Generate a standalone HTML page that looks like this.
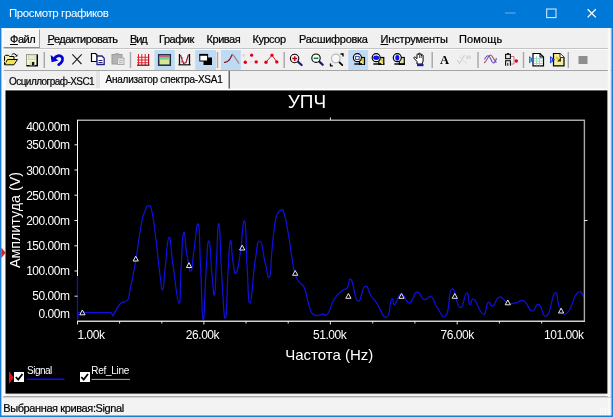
<!DOCTYPE html>
<html><head><meta charset="utf-8">
<style>
*{box-sizing:border-box;margin:0;padding:0}
html,body{width:613px;height:417px;overflow:hidden;background:#f0f0f0;font-family:"Liberation Sans",sans-serif}
#win{position:absolute;left:0;top:0;width:613px;height:417px;background:#f0f0f0}
#title{position:absolute;left:0;top:0;width:613px;height:28px;background:#0078d7;color:#fff;font-size:11.5px}
#title .t{position:absolute;left:9px;top:7px;white-space:nowrap;letter-spacing:-0.4px}
.abs{position:absolute}
#menu{position:absolute;left:1px;top:28px;width:611px;height:20px;background:#f0f0f0;font-size:11px;color:#000}
#menu span{position:absolute;top:4.500px;white-space:nowrap;letter-spacing:-0.45px;-webkit-text-stroke:0.22px #000}
#menu u{text-decoration:underline}
#tb{position:absolute;left:1px;top:48px;width:611px;height:22px;background:#f0f0f0}
#tabs{position:absolute;left:1px;top:70px;width:611px;height:21px;background:#f0f0f0;font-size:10px;-webkit-text-stroke:0.18px #000}
#plot{position:absolute;left:5px;top:91px;width:603px;height:302px;overflow:hidden}
#status{position:absolute;left:1px;top:397px;width:611px;height:19px;background:#f3f3f3;font-size:11px;color:#000;-webkit-text-stroke:0.2px #000}
.yl{position:absolute;color:#fff;font-size:12px;left:0;width:64.4px;text-align:right;white-space:nowrap;letter-spacing:-0.5px;line-height:14px}
.xl{position:absolute;color:#fff;font-size:12px;top:236.5px;white-space:nowrap;letter-spacing:-0.45px;line-height:14px}
.lg{position:absolute;color:#fff;font-size:10px;white-space:nowrap;line-height:12px}
.cb{position:absolute;width:10px;height:10px;background:#fff}
</style></head><body style="will-change:transform">
<div id="win"></div>
<div id="title"><span class="t">Просмотр графиков</span>
<svg class="abs" style="left:490px;top:0" width="123" height="28" viewBox="490 0 123 28">
<path d="M505 13h10.500" stroke="#8cc4f0" stroke-width="1" fill="none" opacity=".75"/>
<rect x="546.700" y="9" width="9.300" height="8.600" stroke="#cfe6fa" stroke-width="1.100" fill="none"/>
<path d="M587.600 9.200l8.200 8.200M595.800 9.200l-8.200 8.200" stroke="#fff" stroke-width="1.300" fill="none"/>
</svg>
</div>
<div id="menu">
<div class="abs" style="left:1px;top:1px;width:38px;height:19px;background:#f6f6f6;border-right:1px solid #a0a0a0;border-bottom:1px solid #8c8c8c;border-top:1px solid #fff;border-left:1px solid #fff"></div>
<span style="left:9px"><u>Ф</u>айл</span>
<span style="left:46.5px"><u>Р</u>едактировать</span>
<span style="left:129px;letter-spacing:-1.1px"><u>В</u>ид</span>
<span style="left:158px">График</span>
<span style="left:205.5px">Кривая</span>
<span style="left:251.5px">Курсор</span>
<span style="left:298px;letter-spacing:-0.3px">Расшифровка</span>
<span style="left:379.5px;letter-spacing:-0.13px"><u>И</u>нструменты</span>
<span style="left:458px;letter-spacing:0.15px">Помощь</span>
</div>
<div id="tb"><svg class="abs" style="left:0;top:0" width="611" height="23" viewBox="1 48 611 23">
<!-- highlights -->
<g fill="#bfdbf3">
<rect x="154.5" y="49.5" width="20.3" height="20.5"/>
<rect x="195.2" y="49.5" width="20.8" height="20.5"/>
<rect x="221" y="49.5" width="19.8" height="20.5"/>
<rect x="348.3" y="49.5" width="19.8" height="20.5"/>
</g>
<!-- separators -->
<g stroke="#a6a6a6" stroke-width="1.4">
<path d="M44.3 52v16M130.5 52v16M217.5 52v16M284.2 52v16M432.2 52v16M478 52v16M523.5 52v16M568.3 52v16"/>
</g>
<!-- 1 open -->
<g stroke="#000" stroke-width="1" stroke-linejoin="round">
<path d="M4.5 64.5v-8.2l1-1h3l1 1.2h4.5v3" fill="#f5ee9a"/>
<path d="M4.5 64.8l3-5.3h10l-3.6 5.3z" fill="#f2e25a"/>
<path d="M11.5 55c1.2-1.6 3.2-1.8 4.6 0" fill="none"/>
<path d="M15 56.5h2.4v-2.4z" fill="#000" stroke="none"/>
</g>
<!-- 2 save -->
<g>
<rect x="26.5" y="54.5" width="10.5" height="11" fill="#f7f7c6" stroke="#9a9a8a" stroke-width="1"/>
<path d="M37.3 54.5v11.4M26.5 65.7h11.3" stroke="#000" stroke-width="1.4" fill="none"/>
<rect x="28.5" y="55" width="6.5" height="4.5" fill="#e4ecd8" stroke="#b8c0a8" stroke-width=".6"/>
<rect x="29.5" y="61.5" width="5.5" height="4" fill="#d8d8c0"/>
<rect x="32" y="62" width="2.2" height="3.5" fill="#111"/>
</g>
<!-- 3 undo -->
<g>
<path d="M50.6 55l1 7.2l6.8-1.6z" fill="#0000d4"/>
<path d="M54.5 58.6c1.2-3 5.2-4 7.4-1.6c1.8 2.2 0.5 5.4-3.2 7.6" fill="none" stroke="#0000d4" stroke-width="2.8" stroke-linecap="round"/>
</g>
<!-- 4 X -->
<path d="M72.3 54.3l9.2 9.7M81.7 54.3l-9.4 10" stroke="#222" stroke-width="1.1" fill="none"/>
<!-- 5 copy -->
<g>
<path d="M91.5 53.5h4l1.5 1.5v6.5h-5.5z" fill="#fff" stroke="#000" stroke-width="1.2"/>
<path d="M97 56h5l2.2 2.2v6.3h-7.2z" fill="#fff" stroke="#202080" stroke-width="1.3"/>
<path d="M98.5 60.5h4M98.5 62.5h4" stroke="#202080" stroke-width="1.1"/>
</g>
<!-- 6 paste disabled -->
<g>
<rect x="112" y="54.5" width="10" height="9.5" fill="#b4b4b4" stroke="#9a9a9a" stroke-width="1"/>
<rect x="115" y="53.2" width="4" height="2.2" fill="#a8a8a8"/>
<rect x="117.5" y="58" width="6.5" height="6.5" fill="#e6e6e6" stroke="#aaa" stroke-width="1"/>
<path d="M119 60.5h3.5M119 62.5h3.5" stroke="#aaa" stroke-width=".8"/>
</g>
<!-- 7 grid -->
<g fill="none">
<rect x="137" y="54" width="12" height="11" fill="#fff" stroke="none"/>
<path d="M138.5 54v11M141.8 54v11M145.2 54v11M137 57.2h12M137 60h12M137 62.7h12" stroke="#e8202a" stroke-width="1.1"/>
<path d="M148.6 54v11" stroke="#b01018" stroke-width="1.2"/>
<path d="M137 65.2h12.4" stroke="#701010" stroke-width="1.3"/>
</g>
<!-- 8 legend -->
<g>
<rect x="158.7" y="54.8" width="11.6" height="10.4" fill="#d8e890" stroke="#1c2c48" stroke-width="1.5"/>
<rect x="159.5" y="55.6" width="10" height="2" fill="#c86080"/>
<rect x="159.5" y="57.6" width="10" height="2" fill="#70d090"/>
</g>
<!-- 9 cursors -->
<g fill="none">
<rect x="179" y="54" width="11" height="11" fill="#fff" stroke="none" opacity=".6"/>
<path d="M179.5 54v11M189.5 54v11" stroke="#111" stroke-width="1.3"/>
<path d="M178.5 64.8h12" stroke="#111" stroke-width="1.2"/>
<path d="M180.5 55l3 8.5l2.5-1l2.5-8" stroke="#981830" stroke-width="1.2"/>
<path d="M181 63l2-6" stroke="#e08090" stroke-width="1"/>
</g>
<!-- 10 overlapping squares -->
<g>
<rect x="203.5" y="57.5" width="8.5" height="7.5" fill="#000"/>
<rect x="199.8" y="55" width="7.8" height="6" fill="#fff" stroke="#000" stroke-width="1"/>
<path d="M199.3 54.7h8.8" stroke="#000" stroke-width="1.6"/>
</g>
<!-- 11 curve -->
<g fill="none" stroke-linecap="round">
<path d="M224.5 62.3c2 0.2 4-1 5.5-3.5l2.3-4.3" stroke="#801020" stroke-width="1.2"/>
<path d="M232.3 54.5c1.5 1 4.5 5.5 6.5 8.7" stroke="#a08088" stroke-width="1.2"/>
</g>
<!-- 12 dots -->
<g fill="#e0001c">
<circle cx="245.3" cy="62.3" r="1.7"/><circle cx="251.6" cy="55.2" r="1.6"/><circle cx="256.2" cy="61.9" r="1.7"/>
<circle cx="243.5" cy="55.5" r="1.4" fill="#f8c8e0"/><circle cx="251" cy="62" r="1.2" fill="#f4d8ec"/>
</g>
<!-- 13 dots line -->
<g fill="#e0001c">
<path d="M266 62.3l6-7.1l4.8 6.7" stroke="#e02038" stroke-width="1" fill="none"/>
<circle cx="266" cy="62.3" r="1.7"/><circle cx="272" cy="55.2" r="1.6"/><circle cx="276.8" cy="61.9" r="1.7"/>
</g>
<!-- 14 zoom in -->
<g>
<path d="M298 61.8l3.6 3.2" stroke="#18187a" stroke-width="2.2" stroke-linecap="round"/>
<circle cx="294.6" cy="58.5" r="4.2" fill="#fbf2f2" stroke="#000" stroke-width="1.1"/>
<path d="M292.300 58.6h4.800M294.700 56.200v4.800" stroke="#c00018" stroke-width="1.5"/>
</g>
<!-- 15 zoom out -->
<g>
<path d="M319.300 61.600l3.400 3.200" stroke="#18187a" stroke-width="2.2" stroke-linecap="round"/>
<circle cx="316" cy="58.200" r="4.200" fill="#f2fbf2" stroke="#000" stroke-width="1.1"/>
<path d="M313.800 58.300h4.500" stroke="#107838" stroke-width="1.5"/>
</g>
<!-- 16 zoom fit -->
<g>
<path d="M339 61.800l3.300 3.300" stroke="#000" stroke-width="1.700" stroke-linecap="round"/>
<circle cx="335.800" cy="58.500" r="4.300" fill="#f8f8f8" stroke="#b8b8b8" stroke-width="1.200"/>
<path d="M340.500 54h2.500v2.500M330.500 63.500v2.300h2.300" stroke="#000" stroke-width="1.300" fill="none"/>
</g>
<!-- 17 zoom rect (highlighted) -->
<g>
<rect x="359.5" y="57.5" width="5" height="6.8" fill="#d2ca58" stroke="#000" stroke-width="1.15"/>
<path d="M354.300 64h10.700" stroke="#000" stroke-width="1.400"/>
<path d="M360.5 61l3 3" stroke="#f0f0a0" stroke-width="1.2"/>
<circle cx="357.4" cy="57.700" r="4" fill="#fff" stroke="#000" stroke-width="1.2"/>
<rect x="355.6" y="56.4" width="3.6" height="3" fill="#fff" stroke="#3040c0" stroke-width="1"/>
</g>
<!-- 18 -->
<g>
<rect x="378.8" y="57.5" width="5" height="6.8" fill="#d2ca58" stroke="#000" stroke-width="1.15"/>
<path d="M373.300 64h11" stroke="#000" stroke-width="1.400"/>
<path d="M379.8 61l3 3" stroke="#f0f0a0" stroke-width="1.2"/>
<circle cx="376.200" cy="57.700" r="4" fill="#fff" stroke="#000" stroke-width="1.2"/>
<ellipse cx="376.200" cy="57.700" rx="3" ry="2.200" fill="#1010f0"/>
</g>
<!-- 19 -->
<g>
<rect x="399.3" y="57.5" width="5" height="6.8" fill="#e4e2b0" stroke="#000" stroke-width="1.150"/>
<path d="M394.300 64h10.500" stroke="#000" stroke-width="1.400"/>
<path d="M4.3 61l3 3" stroke="#d8d880" stroke-width="1.2"/>
<circle cx="397.300" cy="57.700" r="4" fill="#eef" stroke="#000" stroke-width="1.2"/>
<ellipse cx="397.300" cy="57.700" rx="2" ry="2.800" fill="#1010f0"/>
</g>
<!-- 20 hand -->
<g>
<path d="M417 64v-2.5l-3-3.2c-.6-.9.5-1.8 1.4-1l1.6 1.4v-4c0-1 1.5-1 1.5 0v-.8c0-1 1.6-1 1.6 0v.6c0-1 1.5-1 1.5 0v1c0-.9 1.5-.9 1.5 0v5.500l-1 3z" fill="#fff" stroke="#000" stroke-width="1"/>
<path d="M419.6 54.500v3.500M421.2 54.800v3.2" stroke="#000" stroke-width=".7"/>
<rect x="417" y="64" width="6.5" height="2.2" fill="#20208a"/>
</g>
<!-- 21 A -->
<text x="440" y="64.3" font-family="Liberation Serif" font-weight="bold" font-size="12.5" fill="#000">A</text>
<!-- 22 disabled -->
<g fill="none" stroke="#cfcfcf" stroke-width="1.2">
<path d="M457 60l2.5 3.500l5-8.5"/>
<rect x="466" y="55.5" width="5" height="3.5" fill="#dcdcdc" stroke="none"/>
<path d="M459 56l8 8" stroke="#e2e2e2"/>
</g>
<!-- 23 sines -->
<g fill="none" stroke-width="1.1">
<path d="M484 63c3-1 4-8 6.5-8s3 6 6 7.5" stroke="#903050" opacity=".85"/>
<path d="M484.5 59.500c2.5-5 4.5-5 6.5 0s4 4.5 5.5-1.5" stroke="#5040c8" opacity=".85"/>
</g>
<!-- 24 boxes arrow -->
<g fill="none">
<rect x="505.600" y="54.300" width="4.800" height="4.400" fill="#e4e4e4" stroke="#000" stroke-width="1.050"/>
<path d="M507 53.600h2" stroke="#000" stroke-width="1"/>
<path d="M505.600 65.800v-5h4.800v5" fill="#e8e8e8" stroke="#000" stroke-width="1.050"/>
<path d="M507.800 63v2.800" stroke="#000" stroke-width=".9"/>
<path d="M511 56.500h3v7.500h-3" stroke="#e06878" stroke-width="1"/>
<circle cx="516.300" cy="61" r="1.700" fill="#e00020"/>
</g>
<!-- 25 export grid -->
<g>
<path d="M533 53.500h7l3.5 3.500v8.800h-10.500z" fill="#fff" stroke="#000" stroke-width="1.2"/>
<path d="M540 53.500v3.500h3.5" fill="none" stroke="#000" stroke-width="1"/>
<path d="M534 58.500h9M534 61h9M534 63.500h9M536.5 56v9.500M539.5 57v8.5" stroke="#a0d0c0" stroke-width=".9" fill="none"/>
<path d="M529 56v7.500l5.2-3.750z" fill="#1878d8"/>
<path d="M530.3 58v3.5" stroke="#60c0f0" stroke-width="1"/>
</g>
<!-- 26 export doc -->
<g>
<path d="M553.5 53.500h6.500l4 4v8.300h-10.500z" fill="#f4eca0" stroke="#000" stroke-width="1.2"/>
<path d="M560 53.500v4h4" fill="#fff" stroke="#403020" stroke-width="1"/>
<path d="M556 57l3.5 3.5" stroke="#e0d000" stroke-width="2"/>
<path d="M557 61.500h4v-4z" fill="#303000"/>
<path d="M550 56v7.500l5.2-3.750z" fill="#1838e0"/>
<path d="M551.3 58v3.5" stroke="#a0c0ff" stroke-width="1"/>
</g>
<!-- 27 gray square -->
<rect x="578.5" y="56" width="9" height="8" fill="#8e8e8e"/>
</svg>
</div>
<div id="tabs">
<div class="abs" style="left:95px;top:1px;width:4px;height:18px;background:#e4e4e4"></div>
<div class="abs" style="left:99px;top:1px;width:130px;height:18px;background:#f8f8f8;border-right:1px solid #6a6a6a"></div>
<div class="abs" style="left:227px;top:1px;width:1px;height:18px;background:#b0b0b0"></div>
<span class="abs" style="left:8px;top:6px;white-space:nowrap;letter-spacing:-0.55px">Осциллограф-XSC1</span>
<span class="abs" style="left:104.5px;top:4px;white-space:nowrap;letter-spacing:-0.24px">Анализатор спектра-XSA1</span>
</div>
<div class="abs" style="left:1px;top:48px;width:611px;height:1px;background:#c4c4c4"></div>
<div class="abs" style="left:1px;top:49px;width:611px;height:1px;background:#fafafa"></div>
<div class="abs" style="left:1px;top:70px;width:611px;height:1px;background:#a4a4a4"></div>
<svg class="abs" style="left:0;top:80px" width="613" height="320" viewBox="0 80 613 320"><rect x="1" y="88.600" width="611" height="7.400" fill="#fff"/><rect x="1.4" y="71" width="5" height="325" fill="#fbfbfb"/><rect x="606" y="89" width="4.2" height="307" fill="#fff"/><rect x="610.2" y="71" width="1.3" height="325" fill="#c8d4dc"/><rect x="5.5" y="90.4" width="602" height="303.2" fill="#000"/></svg>
<div id="plot">
<svg class="abs" style="left:0;top:0" width="603" height="302" viewBox="5 91 603 302">
<path d="M77.5 276.0L77.5 319.5L78.5 312.5L111.0 312.5L113.0 316.0C115.0 312.6 115.9 308.5 120.0 304.0C124.1 299.5 124.7 303.9 127.5 300.0C130.0 296.1 127.8 300.6 130.0 290.0C132.2 279.4 132.4 279.9 135.5 262.0C138.6 244.1 138.3 240.3 141.0 226.0C143.7 211.7 142.9 216.6 145.0 211.0C147.1 205.4 146.5 205.7 148.5 206.0C150.5 206.3 149.9 202.5 152.0 212.0C154.1 221.5 153.8 222.4 156.0 240.0C158.2 257.6 158.1 261.1 160.0 275.0C161.9 288.9 161.3 290.9 162.7 289.5C164.1 288.1 163.2 284.6 165.0 270.0C166.8 255.4 166.8 238.9 169.0 237.5C171.2 236.1 170.2 246.7 173.0 265.0C175.8 283.3 176.8 301.6 179.0 303.0C181.0 304.4 179.7 289.6 181.0 270.0C182.3 250.4 181.9 237.2 183.6 233.0C185.3 228.8 184.9 244.4 187.0 255.0C189.1 265.6 189.0 272.4 191.0 271.0C193.0 269.6 192.0 263.0 194.0 250.0C196.0 237.0 196.5 220.3 198.3 224.5C200.1 228.7 199.1 238.4 200.5 265.0C201.9 291.6 201.7 317.5 203.2 319.5C204.7 321.5 204.4 294.0 206.0 272.0C207.6 250.0 207.3 240.2 209.0 241.0C210.7 241.8 210.4 260.2 212.0 275.0C213.6 289.8 213.3 298.2 214.6 294.0C215.9 289.8 215.3 279.5 216.5 260.0C217.7 240.5 217.5 218.9 219.0 224.5C220.5 230.1 220.2 253.8 222.0 280.0C223.8 306.2 223.8 320.2 225.5 318.0C227.2 315.8 226.6 293.6 228.0 272.0C229.4 250.4 229.0 243.8 230.4 241.0C231.8 238.2 231.4 253.0 233.0 262.0C234.6 271.0 234.0 275.0 236.0 273.0C238.0 271.0 237.6 269.6 240.0 255.0C242.4 240.4 242.6 218.2 244.6 221.0C246.6 223.8 245.5 242.0 247.0 265.0C248.5 288.0 247.8 303.8 250.0 303.0C252.2 302.2 252.3 279.4 255.0 262.0C257.7 244.6 257.0 241.0 259.8 241.0C262.6 241.0 262.3 251.9 265.0 262.0C267.7 272.1 267.5 280.4 269.5 277.0C271.5 273.6 270.5 265.1 272.0 250.0C273.5 234.9 273.3 233.4 275.0 223.0C276.7 212.6 276.3 216.5 278.0 213.0C279.7 209.5 279.3 210.5 281.0 210.5C282.7 210.5 282.0 207.0 284.0 213.0C286.0 219.0 285.8 219.4 288.0 232.0C290.2 244.6 290.0 246.2 292.0 258.0C294.0 269.8 292.8 267.0 295.0 274.0C297.2 281.0 297.3 278.8 300.0 283.0C302.7 287.2 302.1 282.1 304.8 289.0C307.5 295.9 307.0 300.4 309.7 307.7C312.4 315.0 311.0 313.2 314.6 315.0C318.2 316.8 319.1 314.5 322.7 314.2C326.3 313.9 324.4 318.1 327.6 314.0C330.8 309.9 329.9 306.1 334.0 299.5C338.1 292.9 338.7 293.7 342.3 290.5C345.9 287.3 344.5 290.9 347.0 288.0C349.5 285.1 348.3 276.4 351.3 280.0C354.3 283.6 354.0 299.2 357.8 301.0C361.6 302.8 361.3 287.9 365.0 286.5C368.7 285.1 367.8 291.4 371.0 296.0C374.2 300.6 372.3 296.8 376.6 302.8C380.9 308.8 382.2 318.4 386.4 317.5C390.6 316.6 389.1 303.2 391.5 299.5C393.9 295.8 392.1 306.0 394.8 304.4C397.5 302.8 397.2 294.2 401.3 293.8C405.4 293.4 405.2 303.2 409.5 302.8C413.8 302.4 412.7 293.1 416.8 292.2C420.9 291.3 419.9 298.2 424.0 299.5C428.1 300.8 427.8 294.7 431.5 297.0C435.2 299.3 433.1 302.7 437.2 307.7C441.3 312.7 442.1 320.2 446.2 315.0C450.3 309.8 448.0 291.0 451.9 289.0C455.8 287.0 455.9 306.6 460.0 307.7C464.1 308.8 463.9 293.9 466.6 293.0C469.3 292.1 467.7 302.6 469.8 304.4C471.9 306.2 470.2 296.8 474.0 299.5C477.8 302.2 479.3 313.3 483.2 314.2C487.1 315.1 485.3 305.1 488.0 302.8C490.7 300.5 489.8 307.6 493.0 306.0C496.2 304.4 495.4 297.9 499.5 297.0C503.6 296.1 503.0 301.2 507.6 302.8C512.2 304.4 511.2 303.3 515.8 302.8C520.4 302.3 519.5 298.7 524.0 301.0C528.5 303.3 527.9 310.0 532.0 311.0C536.1 312.0 534.5 303.1 538.6 304.4C542.7 305.7 542.2 319.0 546.8 315.8C551.4 312.6 551.4 295.3 555.0 293.0C558.6 290.7 556.3 302.2 559.8 307.7C563.3 313.2 562.6 316.7 567.5 312.6C572.4 308.5 572.6 297.4 577.3 293.0C582.0 288.6 582.3 295.9 584.3 297.0" fill="none" stroke="#1010e4" stroke-width="1.2" stroke-linejoin="round"/>
<g stroke="#a8a8a8" stroke-width="1.4" fill="none"><path d="M77 120.2h508M584.4 120v202"/></g>
<g stroke="#d0d0d0" stroke-width="1.4" fill="none"><path d="M77 321.2h508"/></g>
<path d="M77.5 120v156" stroke="#fff" stroke-width="1" fill="none"/>
<path d="M74.5 144.8h3M74.5 170.0h3M74.5 195.2h3M74.5 220.5h3M74.5 245.8h3M74.5 271.0h3M74.5 296.2h3M77.5 321v3.5M203.9 321v3.5M330.4 321v3.5M457.2 321v3.5M119.6 321v2.5M161.8 321v2.5M246.0 321v2.5M288.2 321v2.5M372.7 321v2.5M414.9 321v2.5M499.4 321v2.5M541.6 321v2.5M330.4 117.5v2.5M584 220.5h3.5" stroke="#e8e8e8" stroke-width="1" fill="none"/>
<g stroke="#f4f4f4" stroke-width="0.95" fill="#000"><path d="M82.4 310.0l2.6 4.8h-5.2z"/><path d="M135.7 256.2l2.6 4.8h-5.2z"/><path d="M189.0 262.7l2.6 4.8h-5.2z"/><path d="M242.2 245.2l2.6 4.8h-5.2z"/><path d="M295.2 270.5l2.6 4.8h-5.2z"/><path d="M348.4 293.5l2.6 4.8h-5.2z"/><path d="M401.5 293.5l2.6 4.8h-5.2z"/><path d="M454.8 293.5l2.6 4.8h-5.2z"/><path d="M507.8 300.0l2.6 4.8h-5.2z"/><path d="M561.1 308.2l2.6 4.8h-5.2z"/></g>
<path d="M9 371l4.5 6.5l-4.5 6.5z" fill="#e81010"/>
<path d="M27 379.300h37.500" stroke="#0a0aff" stroke-width="1.400"/>
<path d="M91.500 379.400h38.500" stroke="#a4b0a4" stroke-width="1"/>
</svg>
<div class="abs" style="left:0.5px;top:-0.5px;width:603px;text-align:center;color:#fff;font-size:19px">УПЧ</div>
<div class="yl" style="top:29.0px">400.00m</div><div class="yl" style="top:47.0px">350.00m</div><div class="yl" style="top:72.5px">300.00m</div><div class="yl" style="top:97.5px">250.00m</div><div class="yl" style="top:122.5px">200.00m</div><div class="yl" style="top:148.0px">150.00m</div><div class="yl" style="top:173.0px">100.00m</div><div class="yl" style="top:198.0px">50.00m</div><div class="yl" style="top:215.5px">0.00m</div>
<div class="xl" style="left:72.5px">1.00k</div><div class="xl" style="left:180.8px">26.00k</div><div class="xl" style="left:308px">51.00k</div><div class="xl" style="left:435.5px">76.00k</div><div class="xl" style="left:539px">101.00k</div>
<div class="abs" style="left:1.3px;top:254.7px;width:646px;text-align:center;color:#fff;font-size:15px;line-height:18px">Частота (Hz)</div>
<div class="abs" style="left:-39.900px;top:119.500px;width:100px;height:18px;text-align:center;color:#fff;font-size:14.300px;line-height:18px;transform:rotate(-90deg);white-space:nowrap">Амплитуда (V)</div>
<div class="cb" style="left:9px;top:281px"></div>
<div class="cb" style="left:74.5px;top:281px"></div>
<svg class="abs" style="left:0;top:0" width="603" height="302" viewBox="5 91 603 302"><g stroke="#000" stroke-width="1.8" fill="none"><path d="M15.8 377l2.4 2.6l4.3-5.600"/><path d="M81.3 377l2.400 2.600l4.300-5.600"/></g></svg>
<div class="lg" style="left:22px;top:273.800px;letter-spacing:-0.500px">Signal</div>
<div class="lg" style="left:86.300px;top:273.800px;letter-spacing:-0.300px">Ref_Line</div>
</div>
<div class="abs" style="left:1px;top:396px;width:611px;height:1px;background:#a8a8a8"></div>
<div id="status"><span class="abs" style="left:2.200px;top:4.800px;white-space:nowrap;letter-spacing:-0.390px">Выбранная кривая:Signal</span></div>
<svg class="abs" style="left:0;top:0" width="613" height="417" viewBox="0 0 613 417">
<rect x="1.400" y="28" width="2.200" height="388" fill="#fafbfd"/><rect x="607.800" y="28" width="2.800" height="388" fill="#fcf7f3"/>
<rect x="0" y="28" width="1.400" height="389" fill="#1a7ed6"/>
<rect x="1.400" y="28" width=".600" height="389" fill="#9cc8ec"/>
<rect x="610.600" y="28" width=".900" height="389" fill="#bfe6fa"/>
<rect x="611.500" y="28" width="1.500" height="389" fill="#1a7ed6"/>
<rect x="0" y="415.500" width="613" height="1.500" fill="#1a7ed6"/>
<rect x="1" y="397" width="610" height="1" fill="#d4d4d4"/>
<g fill="#fbfbfb"><rect x="600" y="408" width="1" height="7"/><rect x="602.500" y="408" width="1" height="7"/><rect x="605" y="408" width="1" height="7"/></g>
</svg>
<svg class="abs" style="left:0;top:245px" width="8" height="16"><path d="M1.300 2.600l4.300 5.200l-4.300 5.200z" fill="#e61c1c"/></svg>
</body></html>
